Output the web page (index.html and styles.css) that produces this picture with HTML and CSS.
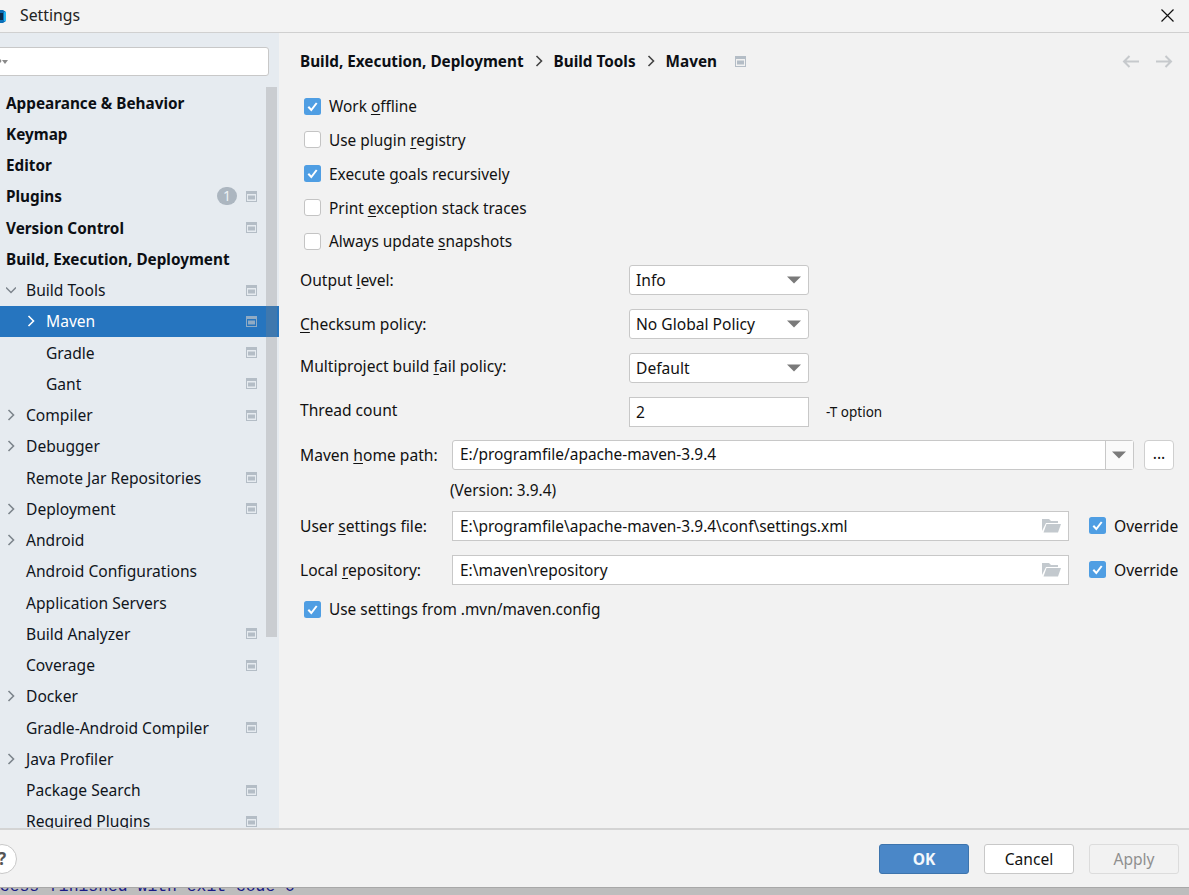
FILE: index.html
```html
<!DOCTYPE html>
<html lang="en">
<head>
<meta charset="utf-8">
<title>Settings</title>
<link rel="stylesheet" href="styles.css">
</head>
<body>
<svg class="defs" width="0" height="0" aria-hidden="true">
  <symbol id="page" viewBox="0 0 11 11"><path fill-rule="evenodd" fill="#b4bdc6" d="M0 0h11v11H0zM1 3v7h9V3z"/><rect x="2" y="4.500" width="7" height="4" fill="#b4bdc6"/></symbol>
  <symbol id="tick" viewBox="0 0 17 17"><rect width="17" height="17" rx="2.500" fill="#4f9ee3"/><path d="M4.300 8.800 7.300 12 12.700 5" fill="none" stroke="#fff" stroke-width="2"/></symbol>
  <symbol id="right" viewBox="0 0 10 14"><path d="M2.500 2 7.500 7 2.500 12" fill="none" stroke="currentColor" stroke-width="1.600"/></symbol>
  <symbol id="folder" viewBox="0 0 19 15"><path fill="#c3c9ce" d="M0 1h7l2 2h7v2H4L0 13z"/><path fill="#c3c9ce" d="M4.500 6H19l-3 8.500H1.500z"/></symbol>
  <symbol id="caret" viewBox="0 0 14 8"><path d="M0 .5h14L7 7.500z" fill="#7a7a7a"/></symbol>
</svg>
<div class="window">
  <header class="titlebar">
    <svg class="logo" width="6" height="15" viewBox="0 0 6 15"><path d="M0 1h3l3 2v9l-3 2H0z" fill="#0b6fb8"/><path d="M0 4h3v7H0z" fill="#0a2a4a"/><path d="M4 3h2v9H4z" fill="#25b7f0"/></svg>
    <span class="title">Settings</span>
    <svg class="close" width="13" height="13" viewBox="0 0 13 13"><path d="M.5.500 12.500 12.500M12.500.500 .5 12.500" stroke="#111" stroke-width="1.200"/></svg>
  </header>
  <div class="body">
    <aside class="sidebar">
      <div class="search">
        <svg class="search-icon" width="10" height="8" viewBox="0 0 10 8"><path d="M0 0 3 3 M0 6 3 3" stroke="#8a8a8a" stroke-width="1.400" fill="none"/><path d="M4 2h6L7 6z" fill="#8a8a8a"/></svg>
      </div>
      <nav class="tree">
        <div class="row top"><span>Appearance &amp; Behavior</span></div>
        <div class="row top"><span>Keymap</span></div>
        <div class="row top"><span>Editor</span></div>
        <div class="row top"><span>Plugins</span><b class="badge">1</b><svg class="pg"><use href="#page"/></svg></div>
        <div class="row top"><span>Version Control</span><svg class="pg"><use href="#page"/></svg></div>
        <div class="row top"><span>Build, Execution, Deployment</span></div>
        <div class="row"><svg class="tw" viewBox="0 0 10 14"><path d="M0 4 5 9 10 4" transform="translate(0 .5)" fill="none" stroke="#7d858c" stroke-width="1.500"/></svg><span>Build Tools</span><svg class="pg"><use href="#page"/></svg></div>
        <div class="row sub selected"><svg class="tw"><use href="#right"/></svg><span>Maven</span><svg class="pg"><use href="#page"/></svg></div>
        <div class="row sub"><i class="tw"></i><span>Gradle</span><svg class="pg"><use href="#page"/></svg></div>
        <div class="row sub"><i class="tw"></i><span>Gant</span><svg class="pg"><use href="#page"/></svg></div>
        <div class="row"><svg class="tw"><use href="#right"/></svg><span>Compiler</span><svg class="pg"><use href="#page"/></svg></div>
        <div class="row"><svg class="tw"><use href="#right"/></svg><span>Debugger</span></div>
        <div class="row"><i class="tw"></i><span>Remote Jar Repositories</span><svg class="pg"><use href="#page"/></svg></div>
        <div class="row"><svg class="tw"><use href="#right"/></svg><span>Deployment</span><svg class="pg"><use href="#page"/></svg></div>
        <div class="row"><svg class="tw"><use href="#right"/></svg><span>Android</span></div>
        <div class="row"><i class="tw"></i><span>Android Configurations</span></div>
        <div class="row"><i class="tw"></i><span>Application Servers</span></div>
        <div class="row"><i class="tw"></i><span>Build Analyzer</span><svg class="pg"><use href="#page"/></svg></div>
        <div class="row"><i class="tw"></i><span>Coverage</span><svg class="pg"><use href="#page"/></svg></div>
        <div class="row"><svg class="tw"><use href="#right"/></svg><span>Docker</span></div>
        <div class="row"><i class="tw"></i><span>Gradle-Android Compiler</span><svg class="pg"><use href="#page"/></svg></div>
        <div class="row"><svg class="tw"><use href="#right"/></svg><span>Java Profiler</span></div>
        <div class="row"><i class="tw"></i><span>Package Search</span><svg class="pg"><use href="#page"/></svg></div>
        <div class="row"><i class="tw"></i><span>Required Plugins</span><svg class="pg"><use href="#page"/></svg></div>
      </nav>
      <div class="scrollbar"></div>
    </aside>
    <main class="content">
      <div class="crumbs">
        <span>Build, Execution, Deployment</span><svg class="sep"><use href="#right"/></svg>
        <span>Build Tools</span><svg class="sep"><use href="#right"/></svg>
        <span>Maven</span><svg class="pg crumb-pg"><use href="#page"/></svg>
        <span class="nav">
          <svg width="17" height="13" viewBox="0 0 17 13"><path d="M17 6.500H2M7.500 1 2 6.500 7.500 12" fill="none" stroke="#c6c9cc" stroke-width="2"/></svg>
          <svg width="17" height="13" viewBox="0 0 17 13"><path d="M0 6.500H15M9.500 1 15 6.500 9.500 12" fill="none" stroke="#c6c9cc" stroke-width="2"/></svg>
        </span>
      </div>
      <div class="checks">
        <label class="check"><svg class="cb"><use href="#tick"/></svg><span>Work <u>o</u>ffline</span></label>
        <label class="check"><i class="cb empty"></i><span>Use plugin <u>r</u>egistry</span></label>
        <label class="check"><svg class="cb"><use href="#tick"/></svg><span>Execute <u>g</u>oals recursively</span></label>
        <label class="check"><i class="cb empty"></i><span>Print <u>e</u>xception stack traces</span></label>
        <label class="check"><i class="cb empty"></i><span>Always update <u>s</u>napshots</span></label>
      </div>
      <div class="form">
        <div class="frow"><span class="lab wide">Output <u>l</u>evel:</span><div class="select"><span>Info</span><svg class="caret"><use href="#caret"/></svg></div></div>
        <div class="frow"><span class="lab wide"><u>C</u>hecksum policy:</span><div class="select"><span>No Global Policy</span><svg class="caret"><use href="#caret"/></svg></div></div>
        <div class="frow"><span class="lab wide raised">Multiproject build <u>f</u>ail policy:</span><div class="select"><span>Default</span><svg class="caret"><use href="#caret"/></svg></div></div>
        <div class="frow"><span class="lab wide raised">Thread count</span><div class="input thread">2</div><span class="hint">-T option</span></div>
        <div class="frow home"><span class="lab path">Maven <u>h</u>ome path:</span>
          <div class="combo"><span class="combo-text">E:/programfile/apache-maven-3.9.4</span><span class="combo-btn"><svg class="caret"><use href="#caret"/></svg></span></div>
          <div class="dots">...</div>
        </div>
        <div class="version">(Version: 3.9.4)</div>
        <div class="frow"><span class="lab path">User <u>s</u>ettings file:</span>
          <div class="input file"><span>E:\programfile\apache-maven-3.9.4\conf\settings.xml</span><svg class="folder"><use href="#folder"/></svg></div>
          <label class="check over"><svg class="cb"><use href="#tick"/></svg><span>Override</span></label>
        </div>
        <div class="frow"><span class="lab path">Local <u>r</u>epository:</span>
          <div class="input file"><span>E:\maven\repository</span><svg class="folder"><use href="#folder"/></svg></div>
          <label class="check over"><svg class="cb"><use href="#tick"/></svg><span>Override</span></label>
        </div>
        <label class="check last"><svg class="cb"><use href="#tick"/></svg><span>Use settings from .mvn/maven.config</span></label>
      </div>
    </main>
  </div>
  <footer class="footer">
    <div class="help">?</div>
    <div class="btn ok">OK</div>
    <div class="btn cancel">Cancel</div>
    <div class="btn apply">Apply</div>
  </footer>
  <div class="console"><span>ocess finished with exit code 0</span></div>
</div>
</body>
</html>
```
FILE: styles.css
```css
* { box-sizing: border-box; }
html, body { margin: 0; height: 100%; }
body { overflow: hidden; background: #f2f2f2; color: #111; font: 15.600px/20px "Noto Sans", "Open Sans", sans-serif; }
.defs { position: absolute; }
u { text-underline-offset: 2px; }
.window { display: flex; flex-direction: column; height: 895px; overflow: hidden; }

.titlebar { flex: none; height: 33px; display: flex; align-items: center; border-bottom: 1px solid #d0d0d0; background: #f3f3f3; }
.title { margin-left: 14px; margin-top: -2px; font-size: 15.800px; color: #222; }
.close { margin-left: auto; margin-right: 15px; margin-top: -2px; }

.body { flex: none; height: 795px; display: flex; overflow: hidden; }
.sidebar { position: relative; flex: none; width: 279px; background: #e6ebf0; overflow: hidden; }
.search { height: 29px; width: 279px; margin: 14px 0 0 -10px; background: #fff; border: 1px solid #c8c8c8; border-radius: 3px; position: relative; }
.search-icon { position: absolute; left: 7px; top: 10px; }
.tree { margin-top: 10.900px; }
.row { height: 31.250px; display: flex; align-items: center; padding: 0 22px 0 6px; white-space: nowrap; color: #10151c; }
.row.top { font-weight: 700; font-size: 15.300px; color: #0c0f14; }
.row.sub { padding-left: 26px; }
.row.selected { background: #2675bf; color: #fff; }
.tw { flex: none; display: block; width: 20px; height: 14px; color: #7d858c; padding-right: 10px; }
.selected .tw { color: #fff; }
.selected .pg { opacity: .75; }
.pg { flex: none; width: 11px; height: 11px; margin-left: auto; }
.badge { width: 20px; height: 18px; margin-left: auto; margin-right: 9px; border-radius: 9px; background: #acb6c0; color: #eef1f4; font-weight: 400; font-size: 14px; line-height: 18px; text-align: center; }
.badge + .pg { margin-left: 0; }
.scrollbar { position: absolute; left: 266px; top: 54px; width: 11px; height: 550px; background: rgba(128, 128, 128, .28); }

.content { flex: 1; min-width: 0; padding: 16px 10px 0 21px; }
.crumbs { height: 24px; display: flex; align-items: center; font-weight: 700; font-size: 15.300px; white-space: nowrap; color: #0c0f14; }
.sep { width: 10px; height: 14px; margin: 0 10px; color: #444; }
.crumb-pg { margin-left: 18px; }
.nav { margin-left: auto; margin-right: 6px; display: flex; gap: 17px; }
.checks { margin-top: 16.300px; padding-left: 4px; font-size: 15.400px; }
.check { display: flex; align-items: center; height: 33.800px; white-space: nowrap; }
.checks .check span, .last span { padding-top: 2px; }
.cb { flex: none; display: block; width: 17px; height: 17px; margin-right: 8px; }
.cb.empty { background: #fff; border: 1px solid #c4c4c4; border-radius: 3px; }

.form { margin-top: 6.700px; }
.frow { display: flex; align-items: center; height: 30px; margin-bottom: 14px; white-space: nowrap; }
.lab { flex: none; }
.lab.wide { width: 329px; }
.lab.path { width: 152px; }
.lab.raised { margin-top: -4px; }
.select { width: 180px; height: 30px; display: flex; align-items: center; justify-content: space-between; padding: 0 6px; background: #fff; border: 1px solid #c8c8c8; border-radius: 3px; }
.caret { width: 14px; height: 8px; margin-right: 1px; }
.input { height: 30px; background: #fff; border: 1px solid #c8c8c8; padding: 0 7px; display: flex; align-items: center; }
.thread { width: 180px; padding-left: 6px; }
.hint { margin-left: 17px; font-size: 13.500px; }
.home { margin-top: -1px; margin-bottom: 5px; }
.combo { flex: none; width: 682px; height: 30px; display: flex; background: #fff; border: 1px solid #c8c8c8; border-radius: 3px; font-size: 15.450px; }
.combo-text { flex: 1; padding-left: 7px; line-height: 27px; }
.combo-btn { width: 28px; display: flex; align-items: center; justify-content: center; background: #fafafa; border-left: 1px solid #c8c8c8; }
.dots { flex: none; width: 30px; height: 30px; margin-left: 10px; text-align: center; line-height: 24px; background: #fff; border: 1px solid #cfcfcf; border-radius: 4px; }
.version { height: 30px; line-height: 32px; margin-left: 150px; margin-bottom: 6px; font-size: 15.400px; }
.file { flex: none; width: 617px; justify-content: space-between; padding-right: 7px; font-size: 15.450px; }
.folder { width: 19px; height: 15px; }
.over { margin-left: 20px; }
.last { padding-left: 4px; margin-top: -6.500px; font-size: 15.400px; }

.footer { flex: none; height: 59px; display: flex; align-items: center; padding: 0 10px 0 0; border-top: 2px solid #d4d4d4; background: #f2f2f2; gap: 15px; }
.help { width: 30px; height: 30px; margin-left: -13px; margin-right: auto; border-radius: 50%; background: #fff; border: 1px solid #c8c8c8; text-align: center; font-size: 17px; line-height: 28px; font-weight: 700; color: #555; }
.btn { width: 90px; height: 30px; line-height: 28px; text-align: center; border-radius: 3px; border: 1px solid #c8c8c8; background: #fff; }
.ok { background: #4a87c8; border-color: #3d74ad; color: #f4f8fc; font-weight: 700; }
.apply { background: #f2f2f2; border-color: #dcdcdc; color: #8f8f8f; }
.console { flex: 1; position: relative; background: #bdbdbd; border-top: 1px solid #a8a8a8; overflow: hidden; }
.console span { position: absolute; left: -10px; top: -9px; white-space: pre; font: 16.400px/16px "Liberation Mono", monospace; color: #1a1a86; }
```
